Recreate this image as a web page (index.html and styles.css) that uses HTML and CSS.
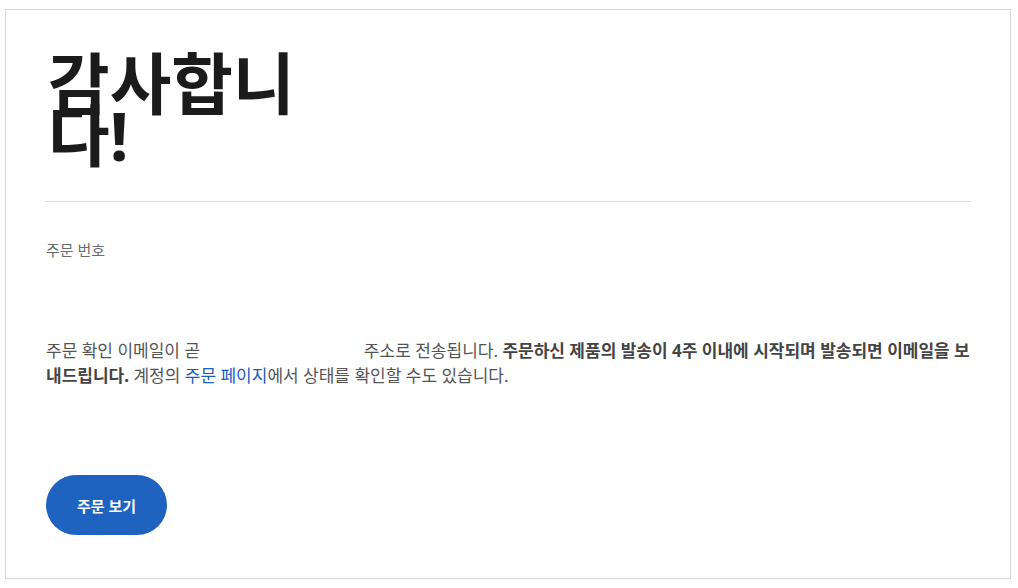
FILE: index.html
```html
<!DOCTYPE html>
<html lang="ko">
<head>
<meta charset="utf-8">
<link rel="stylesheet" href="styles.css">
</head>
<body>
<div class="card">
  <h1 class="title">감사합니다!</h1>
  <hr class="divider">
  <div class="label">주문 번호</div>
  <p class="message">주문 확인 이메일이 곧 <span class="email"></span> 주소로 전송됩니다. <strong>주문하신 제품의 발송이 4주 이내에 시작되며 발송되면 이메일을 보내드립니다.</strong> 계정의 <a class="link" href="#">주문 페이지</a>에서 상태를 확인할 수도 있습니다.</p>
  <a class="button" href="#">주문 보기</a>
</div>
</body>
</html>
```

FILE: styles.css
```css
html, body {
  background: #ffffff;
}
body {
  margin: 9px 7px 9px 5px;
  font-family: "Noto Sans", "Noto Sans CJK KR", sans-serif;
}
.card {
  border: 1px solid #d4d4d4;
  padding: 40px 40px 43px 40px;
  height: 570px;
  box-sizing: border-box;
  display: flex;
  flex-direction: column;
  align-items: flex-start;
}
.title {
  margin: 0;
  width: 290px;
  font-size: 67px;
  line-height: 52px;
  font-weight: 700;
  color: #1b1b1b;
  padding-top: 7px;
  padding-left: 2px;
}
.divider {
  align-self: stretch;
  border: 0;
  border-top: 1px solid #d9d9d9;
  margin: 40px 0 0 0;
}
.label {
  margin-top: 38px;
  font-size: 15px;
  line-height: 20px;
  color: #6b6b6b;
}
.message {
  margin: 78px 0 0 0;
  font-size: 17px;
  line-height: 25px;
  color: #555555;
  word-break: break-all;
}
.message strong {
  font-weight: 700;
  color: #444444;
}
.email {
  display: inline-block;
  width: 155px;
}
.link {
  color: #1a5bbf;
  text-decoration: none;
}
.button {
  margin-top: auto;
  width: 121px;
  height: 60px;
  border-radius: 30px;
  background: #1e63bf;
  color: #ffffff;
  font-size: 15px;
  font-weight: 700;
  text-decoration: none;
  display: flex;
  align-items: center;
  justify-content: center;
}
```
